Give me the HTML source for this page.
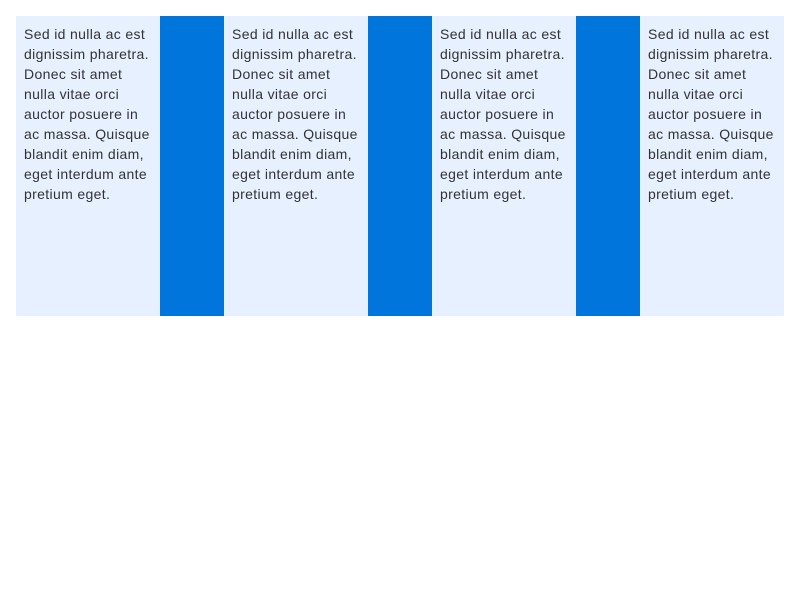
<!DOCTYPE html>
<html><head><style>
body{margin:0;background:#fff;}
.wrap{position:absolute;left:16px;top:16px;width:768px;height:300px;display:flex;}
.t{width:128px;padding:8px;background:#e6f0ff;font-family:"Liberation Sans",sans-serif;font-size:14px;line-height:20px;color:#333;height:284px;white-space:nowrap;letter-spacing:0.35px;}
.b{width:64px;background:#0075db;height:300px;}
</style></head><body>
<div class="wrap">
<div class="t">Sed id nulla ac est<br>dignissim pharetra.<br>Donec sit amet<br>nulla vitae orci<br>auctor posuere in<br>ac massa. Quisque<br>blandit enim diam,<br>eget interdum ante<br>pretium eget.</div>
<div class="b"></div>
<div class="t">Sed id nulla ac est<br>dignissim pharetra.<br>Donec sit amet<br>nulla vitae orci<br>auctor posuere in<br>ac massa. Quisque<br>blandit enim diam,<br>eget interdum ante<br>pretium eget.</div>
<div class="b"></div>
<div class="t">Sed id nulla ac est<br>dignissim pharetra.<br>Donec sit amet<br>nulla vitae orci<br>auctor posuere in<br>ac massa. Quisque<br>blandit enim diam,<br>eget interdum ante<br>pretium eget.</div>
<div class="b"></div>
<div class="t">Sed id nulla ac est<br>dignissim pharetra.<br>Donec sit amet<br>nulla vitae orci<br>auctor posuere in<br>ac massa. Quisque<br>blandit enim diam,<br>eget interdum ante<br>pretium eget.</div>
</div>
</body></html>
